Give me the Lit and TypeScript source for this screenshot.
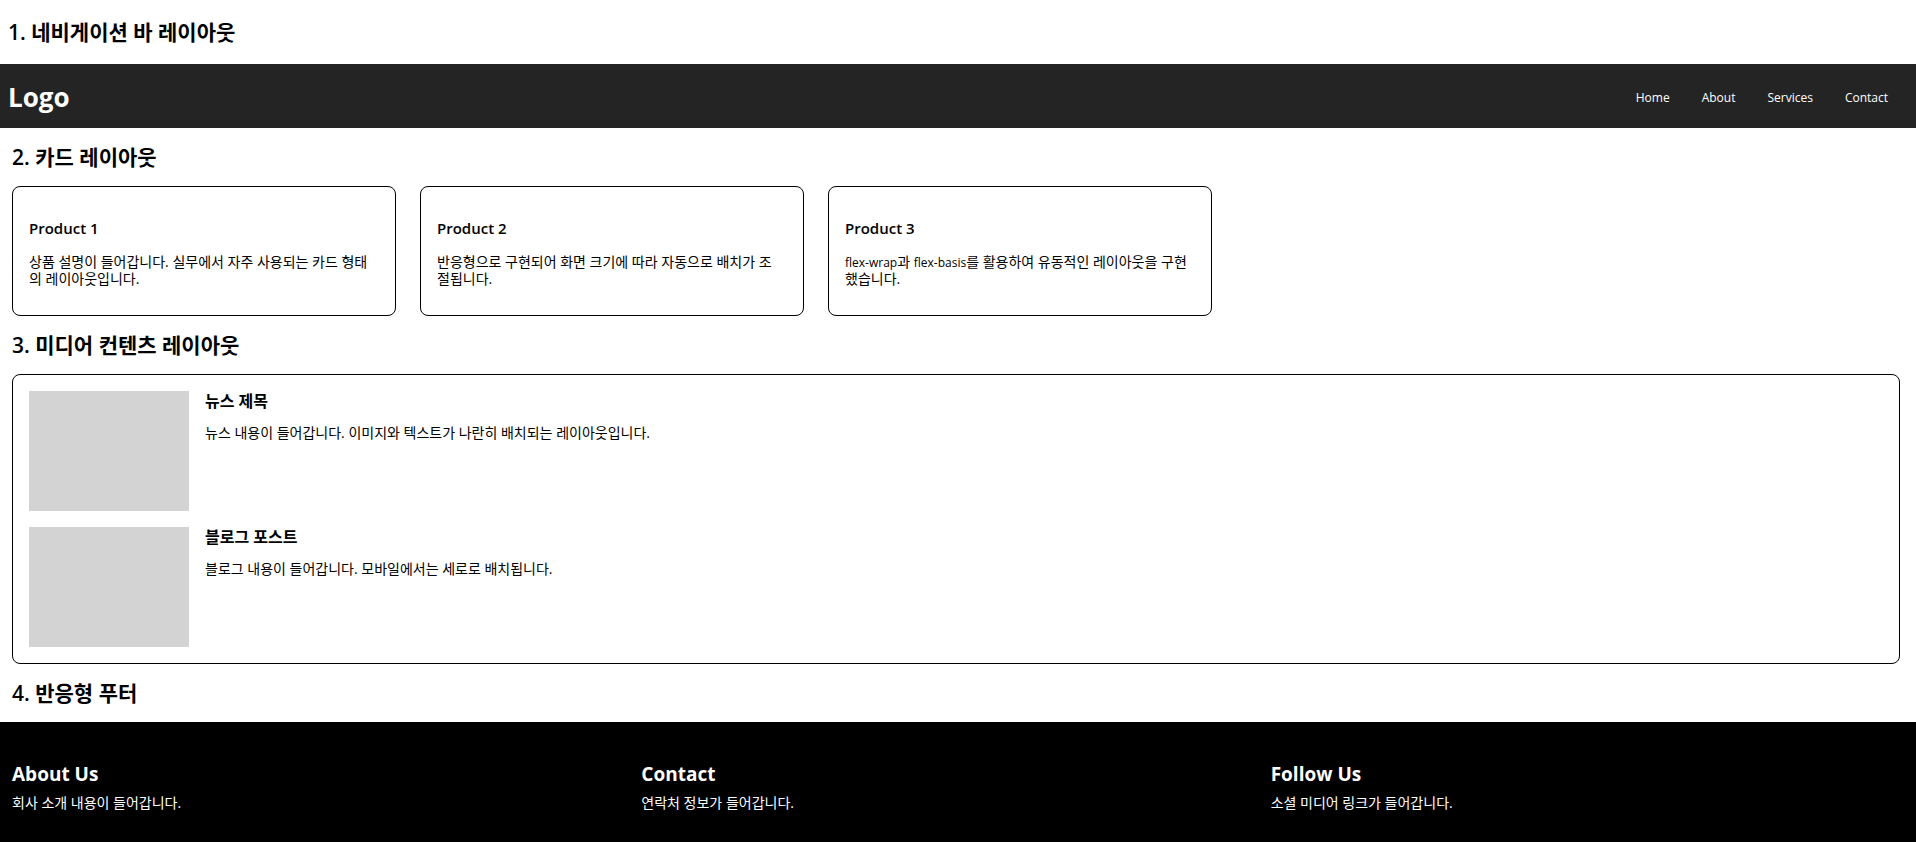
import { LitElement, html, css } from "lit";
import { customElement } from "lit/decorators.js";

const links = ["Home", "About", "Services", "Contact"];

const products = [
  { title: "Product 1", text: "상품 설명이 들어갑니다. 실무에서 자주 사용되는 카드 형태의 레이아웃입니다." },
  { title: "Product 2", text: "반응형으로 구현되어 화면 크기에 따라 자동으로 배치가 조절됩니다." },
  {
    title: "Product 3",
    text: html`<span class="term">flex-wrap</span>과 <span class="term">flex-basis</span>를 활용하여 유동적인 레이아웃을 구현했습니다.`,
  },
];

const posts = [
  { title: "뉴스 제목", text: "뉴스 내용이 들어갑니다. 이미지와 텍스트가 나란히 배치되는 레이아웃입니다." },
  { title: "블로그 포스트", text: "블로그 내용이 들어갑니다. 모바일에서는 세로로 배치됩니다." },
];

const columns = [
  { title: "About Us", text: "회사 소개 내용이 들어갑니다." },
  { title: "Contact", text: "연락처 정보가 들어갑니다." },
  { title: "Follow Us", text: "소셜 미디어 링크가 들어갑니다." },
];

@customElement("app-root")
export class AppRoot extends LitElement {
  static styles = css`
    :host {
      display: block;
      min-height: 100vh;
      background: #fff;
      color: #000;
      font-family: "Open Sans", "Noto Sans CJK KR", sans-serif;
      font-size: 14px;
      line-height: 17px;
    }
    h1, h2, h3, p, ul {
      margin: 0;
      padding: 0;
    }
    .heading {
      font-size: 21px;
      line-height: 26px;
      font-weight: 600;
      padding: 16px 12px;
    }
    .heading.first {
      padding: 19px 8px;
    }
    .nav {
      box-sizing: border-box;
      display: flex;
      justify-content: space-between;
      align-items: center;
      min-height: 64px;
      padding: 2px 28px 0 8px;
      background: #242424;
      color: #fff;
    }
    .logo {
      font-size: 26px;
      line-height: 34px;
      font-weight: 700;
    }
    .links {
      display: flex;
      gap: 32px;
      list-style: none;
      font-size: 12px;
    }
    .links a {
      color: inherit;
      text-decoration: none;
    }
    .term {
      font-size: 12px;
      line-height: 1;
    }
    .cards {
      display: flex;
      flex-wrap: wrap;
      gap: 24px;
      padding: 0 16px 0 12px;
    }
    .card {
      box-sizing: border-box;
      flex: 0 0 384px;
      padding: 31px 20px 28px 16px;
      border: 1px solid #000;
      border-radius: 8px;
      word-break: break-all;
    }
    .card-title {
      font-size: 15px;
      line-height: 20px;
      font-weight: 600;
      margin-bottom: 15px;
    }
    .media {
      display: flex;
      flex-direction: column;
      gap: 16px;
      margin: 0 16px 0 12px;
      padding: 16px;
      border: 1px solid #000;
      border-radius: 8px;
    }
    .post {
      display: flex;
      gap: 16px;
    }
    .post-title {
      font-size: 16px;
      line-height: 20px;
      font-weight: 600;
      margin-bottom: 13px;
    }
    .thumb {
      flex: none;
      width: 160px;
      height: 120px;
      background: #d3d3d3;
    }
    .footer {
      display: grid;
      grid-template-columns: repeat(3, 1fr);
      padding: 39px 16px 31px 12px;
      background: #000;
      color: #fff;
    }
    .footer-title {
      font-size: 19px;
      line-height: 26px;
      font-weight: 700;
      margin-bottom: 7px;
    }
    @media (max-width: 768px) {
      .post {
        flex-direction: column;
      }
      .footer {
        grid-template-columns: 1fr;
        gap: 24px;
      }
    }
  `;

  render() {
    return html`
      <h2 class="heading first">1. 네비게이션 바 레이아웃</h2>
      <nav class="nav">
        <h1 class="logo">Logo</h1>
        <ul class="links">
          ${links.map((name) => html`<li><a href="#">${name}</a></li>`)}
        </ul>
      </nav>

      <h2 class="heading">2. 카드 레이아웃</h2>
      <section class="cards">
        ${products.map(
          (item) => html`<article class="card">
            <h3 class="card-title">${item.title}</h3>
            <p>${item.text}</p>
          </article>`
        )}
      </section>

      <h2 class="heading">3. 미디어 컨텐츠 레이아웃</h2>
      <section class="media">
        ${posts.map(
          (item) => html`<article class="post">
            <div class="thumb"></div>
            <div>
              <h3 class="post-title">${item.title}</h3>
              <p>${item.text}</p>
            </div>
          </article>`
        )}
      </section>

      <h2 class="heading">4. 반응형 푸터</h2>
      <footer class="footer">
        ${columns.map(
          (item) => html`<section>
            <h3 class="footer-title">${item.title}</h3>
            <p>${item.text}</p>
          </section>`
        )}
      </footer>
    `;
  }
}
